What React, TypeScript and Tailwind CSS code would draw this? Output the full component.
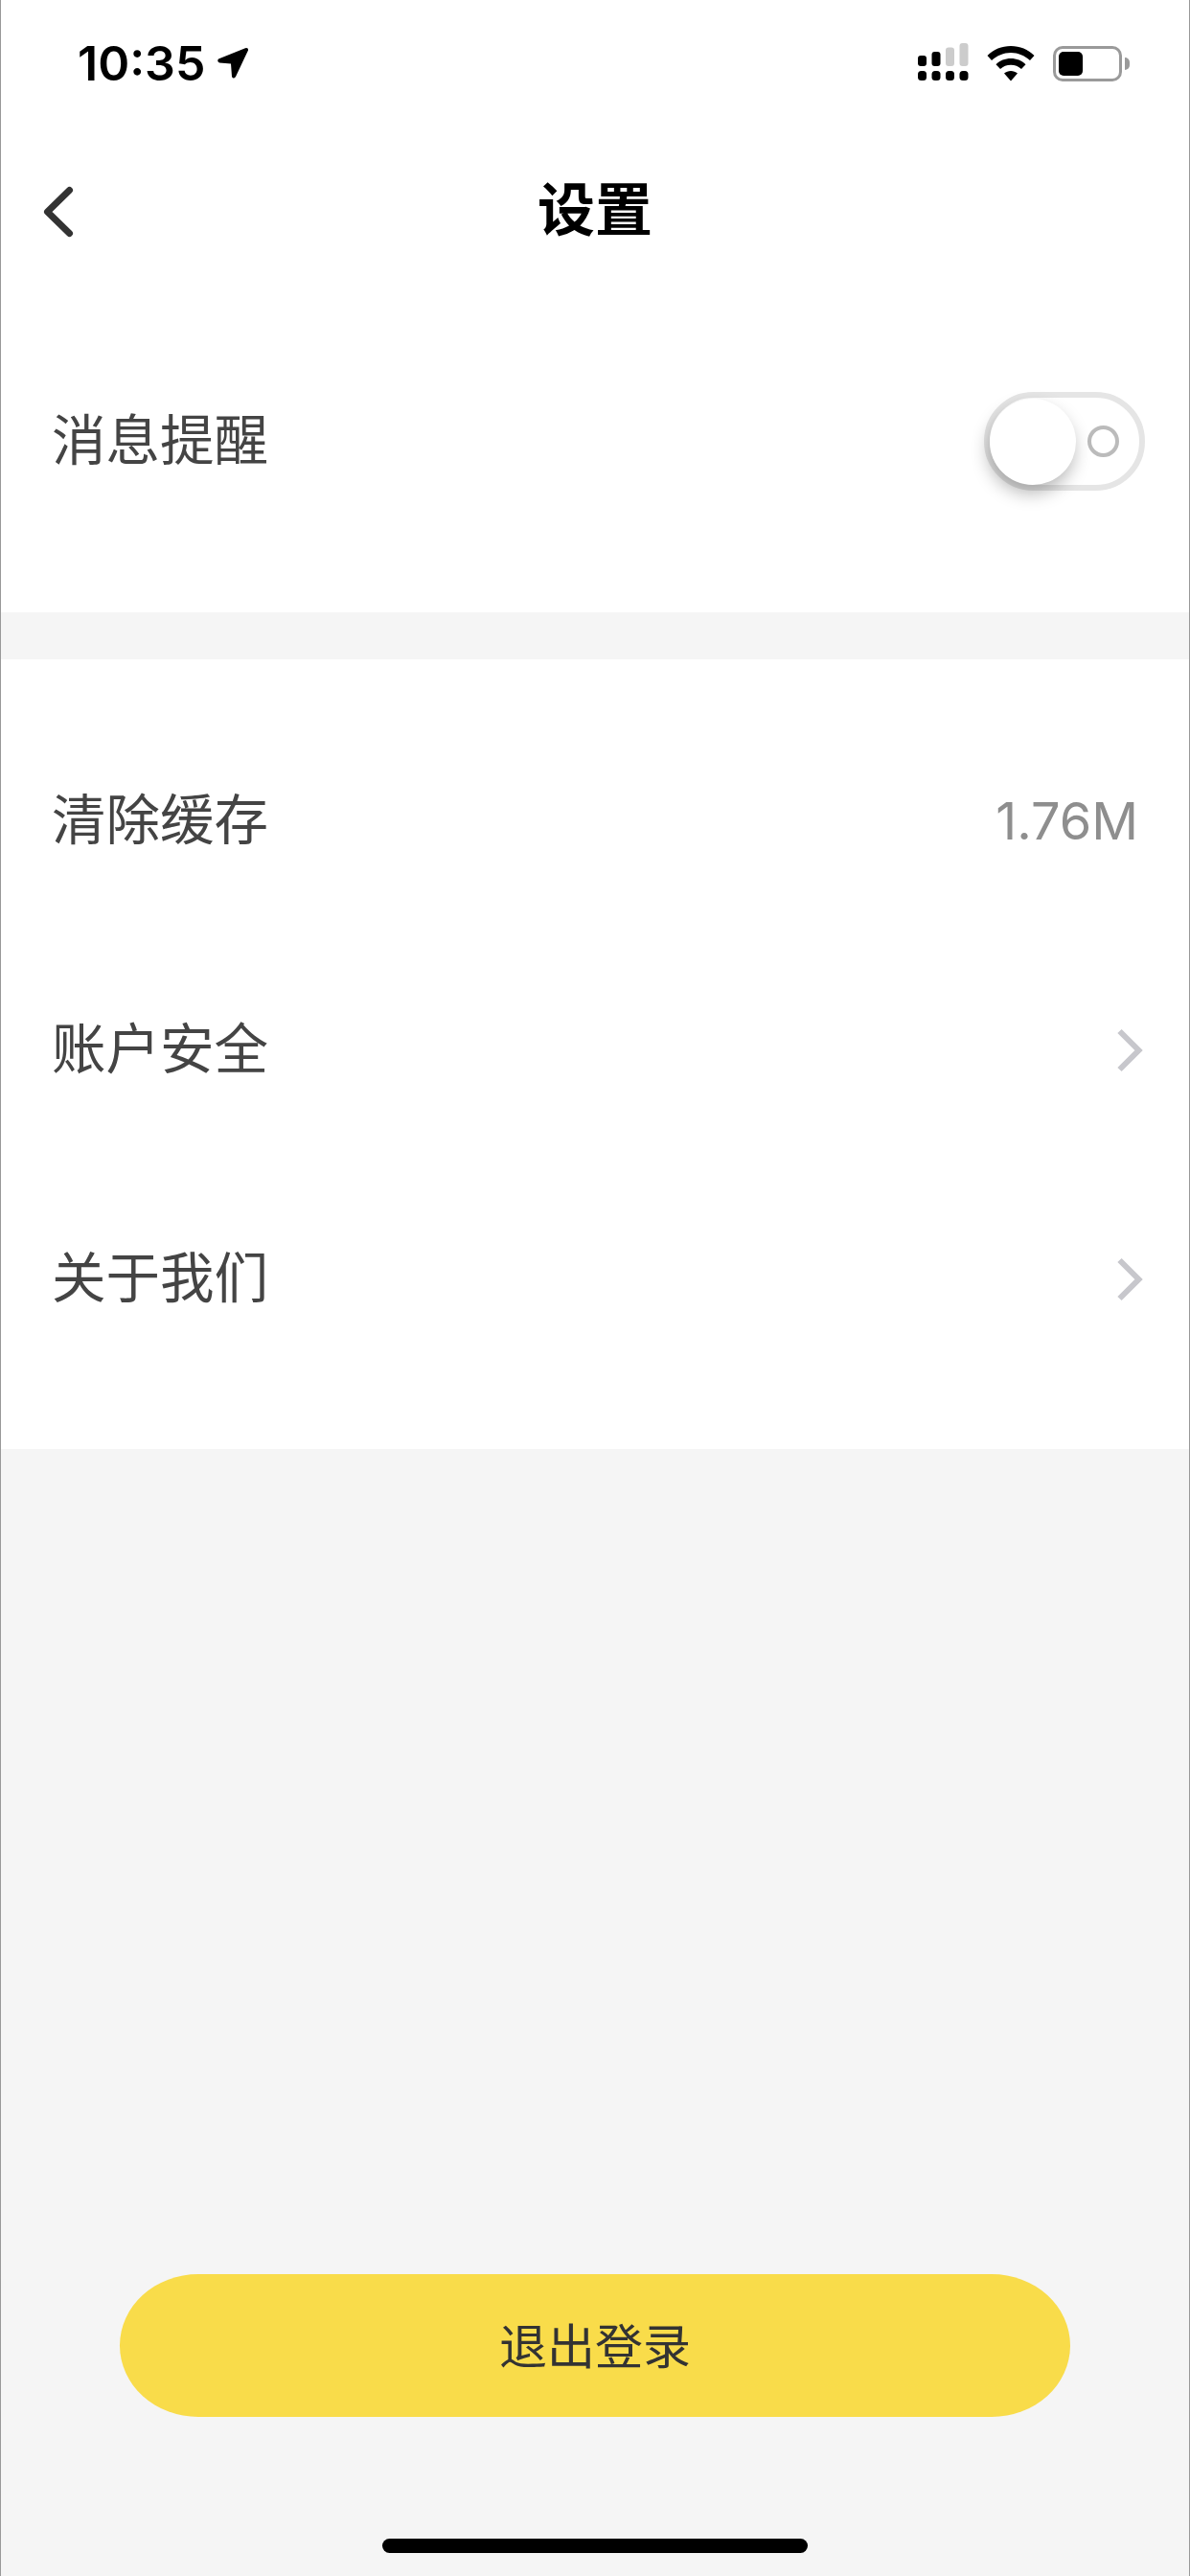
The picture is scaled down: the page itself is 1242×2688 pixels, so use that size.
function Chevron() {
  return (
    <svg width="28" height="46" viewBox="0 0 28 46" fill="none">
      <path d="M3.5 3L23.5 23L3.5 43" stroke="#c7c7cc" strokeWidth="6" />
    </svg>
  );
}

function Row({ label, right }: { label: string; right?: React.ReactNode }) {
  return (
    <div className="flex h-[239px] items-center justify-between pl-[53px]">
      <span className="text-[56.5px] leading-none font-normal text-[#444444]">{label}</span>
      {right}
    </div>
  );
}

function StatusBar() {
  return (
    <div className="flex h-[130px] items-start justify-between pl-[80px] pr-[62px] pt-[39px]">
      <div className="flex items-center gap-[12px]">
        <span className="font-['Inter',sans-serif] text-[50px] leading-[54px] font-semibold text-black">10:35</span>
        <svg width="34" height="34" viewBox="0 0 34 34">
          <path d="M2 12.5L30 1.2Q33.5 0.5 33 3.5L20 31Q17.5 34 16 31L15 17.5L3 16.5Q0 15 2 12.5Z" fill="#000" />
        </svg>
      </div>
      <div className="flex items-start gap-[19px] pt-[6px]">
        <svg width="53" height="40" viewBox="0 0 53 40">
          <rect x="0" y="13" width="9" height="11" rx="3" fill="#000" />
          <rect x="14.5" y="9" width="9" height="15" rx="3" fill="#000" />
          <rect x="29" y="4.5" width="9" height="19.5" rx="3" fill="#cccccc" />
          <rect x="43.5" y="0" width="9" height="24" rx="3" fill="#cccccc" />
          <rect x="0" y="29" width="9" height="10" rx="3.5" fill="#000" />
          <rect x="14.5" y="29" width="9" height="10" rx="3.5" fill="#000" />
          <rect x="29" y="29" width="9" height="10" rx="3.5" fill="#000" />
          <rect x="43.5" y="29" width="9" height="10" rx="3.5" fill="#000" />
        </svg>
        <svg className="mt-[2px]" width="50" height="38" viewBox="0 0 50 38">
          <path d="M25 1C15.5 1 7 4.5 .5 11L5 16C10.5 11 17.5 8 25 8C32.5 8 39.5 11 45 16L49.5 11C43 4.5 34.5 1 25 1Z" fill="#000" />
          <path d="M25 14C19 14 13.5 16.2 9.5 20.2L14 25C17 22.3 20.8 20.8 25 20.8C29.2 20.8 33 22.3 36 25L40.5 20.2C36.5 16.2 31 14 25 14Z" fill="#000" />
          <path d="M25 27C22.5 27 20 28 18 29.5L25 37.5L32 29.5C30 28 27.5 27 25 27Z" fill="#000" />
        </svg>
        <div className="mt-[3px] flex items-center gap-[3px]">
          <div className="flex h-[37px] w-[72px] items-center rounded-[10px] border-[3px] border-[#9a9a9a] pl-[3px]">
            <div className="h-[25px] w-[25px] rounded-[5px] bg-black" />
          </div>
          <div className="h-[13px] w-[5px] rounded-r-full bg-[#9a9a9a]" />
        </div>
      </div>
    </div>
  );
}

function Toggle() {
  return (
    <div className="relative mr-[46px] flex h-[103px] w-[168px] items-center justify-end rounded-full border-[6px] border-[#e5e5e5] pr-[21px]">
      <div className="h-[33px] w-[33px] rounded-full border-[4px] border-[#bbbbbb]" />
      <div className="absolute left-0 top-[1px] h-[90px] w-[90px] rounded-full bg-white shadow-[-2px_9px_18px_rgba(0,0,0,0.28)]" />
    </div>
  );
}

export default function App() {
  return (
    <div className="flex h-[2688px] w-[1242px] flex-col border-x border-[#999999] bg-[#f5f5f5] font-['Inter','Noto_Sans_CJK_SC',sans-serif]">
      <div className="bg-white">
        <StatusBar />
        <div className="relative flex h-[180px] items-center justify-center pb-[2px]">
          <svg className="absolute left-[43px] top-[62px]" width="36" height="58" viewBox="0 0 36 58" fill="none">
            <path d="M28.5 6.5L5.5 29L28.5 51.5" stroke="#333333" strokeWidth="7" strokeLinecap="round" strokeLinejoin="round" />
          </svg>
          <span className="text-[60px] leading-none font-semibold text-black">设置</span>
        </div>
        <div className="h-[329px] pt-[31px]">
          <Row label="消息提醒" right={<Toggle />} />
        </div>
      </div>
      <div className="mt-[49px] bg-white pb-[58px] pt-[49px]">
        <Row label="清除缓存" right={<span className="mr-[53px] text-[54px] leading-none font-normal text-[#8e8e8e]">1.76M</span>} />
        <Row label="账户安全" right={<div className="mr-[48px]"><Chevron /></div>} />
        <Row label="关于我们" right={<div className="mr-[48px]"><Chevron /></div>} />
      </div>
      <div className="mt-auto flex flex-col items-center pb-[24px]">
        <button className="flex h-[149px] w-[992px] items-center justify-center rounded-[82px/74.5px] bg-[#f9dc4a] pt-[2px] text-[50px] leading-none text-[#333333]">
          退出登录
        </button>
        <div className="mt-[127px] h-[15px] w-[444px] rounded-full bg-black" />
      </div>
    </div>
  );
}
